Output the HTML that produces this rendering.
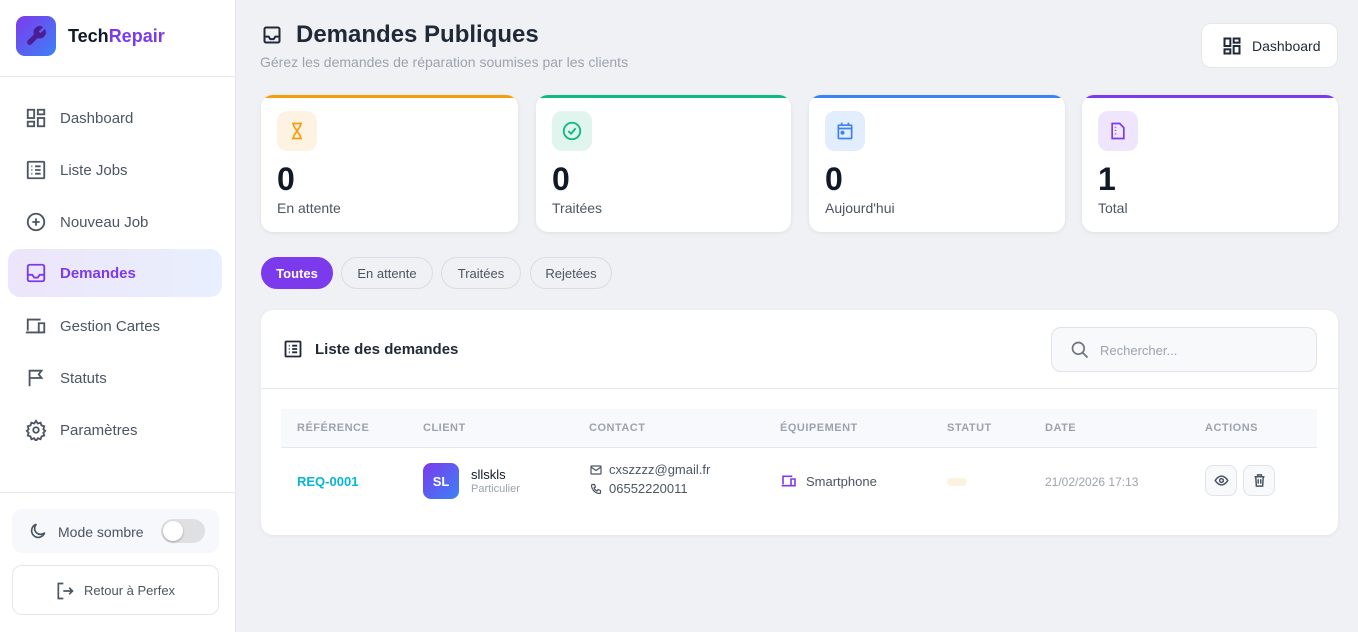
<!DOCTYPE html>
<html><head><meta charset="utf-8"><style>
*{box-sizing:border-box;margin:0;padding:0}
body{width:1358px;height:632px;overflow:hidden;background:#f0f1f5;font-family:"Liberation Sans",sans-serif;position:relative;color:#1f2937}
.sb{position:absolute;left:0;top:0;width:236px;height:632px;background:#fff;border-right:1px solid #e5e7eb}
.logo{position:absolute;left:16px;top:16px;width:40px;height:40px;border-radius:9px;background:linear-gradient(135deg,#7c3aed,#3b82f6);display:flex;align-items:center;justify-content:center}
.brand{position:absolute;left:68px;top:26px;font-size:18px;font-weight:bold;color:#111827}
.brand span{color:#7c3aed}
.hr{position:absolute;left:0;width:235px;height:1px;background:#e5e7eb}
.nav{position:absolute;left:8px;width:214px;height:48px;border-radius:12px;display:flex;align-items:center;padding-left:17px;font-size:15px;color:#4b5563}
.nav svg{width:22px;height:22px;margin-right:13px;fill:none;stroke:#4b5563;stroke-width:2}
.nav.act{background:linear-gradient(90deg,#ede5fb,#e8effd);color:#7c3aed;font-weight:bold}
.nav.act svg{stroke:#7c3aed}
.box{position:absolute;left:12px;width:207px;border-radius:10px}
.main h1{position:absolute;left:296px;top:21px;font-size:24px;font-weight:bold;color:#1f2937}
.sub{position:absolute;left:260px;top:54px;font-size:14px;color:#9ca3af}
.dbtn{position:absolute;left:1201px;top:23px;width:137px;height:45px;background:#fff;border:1px solid #e5e7eb;border-radius:10px;display:flex;align-items:center;padding-left:20px;font-size:14px;color:#1f2937}
.card{position:absolute;top:95px;height:137px;background:#fff;border-radius:12px;box-shadow:0 1px 4px rgba(0,0,0,.08);overflow:hidden}
.card .bar{height:3px}
.card .ic{position:absolute;left:16px;top:16px;width:40px;height:40px;border-radius:10px;display:flex;align-items:center;justify-content:center}
.card .n{position:absolute;left:16px;top:66px;font-size:32px;font-weight:bold;color:#111827}
.card .l{position:absolute;left:16px;top:105px;font-size:14px;color:#4b5563}
.pill{position:absolute;top:257px;height:32px;border-radius:16px;border:1px solid #d9dce2;font-size:13px;color:#4b5563;display:flex;align-items:center;justify-content:center}
.panel{position:absolute;left:261px;top:310px;width:1077px;height:225px;background:#fff;border-radius:12px;box-shadow:0 1px 4px rgba(0,0,0,.06)}
.th{position:absolute;top:409px;left:281px;width:1036px;height:39px;background:#f8f9fc;border-bottom:1px solid #e5e7eb}
.th span{position:absolute;top:13px;font-size:11px;font-weight:bold;color:#9ca3af;letter-spacing:.5px}
.t{position:absolute;font-size:13px}
</style></head><body>
<div class="sb">
 <div class="logo"><svg width="22" height="22" viewBox="0 0 24 24" fill="#4c1d95" stroke="#4c1d95" stroke-width="1.5"><path d="M14.7 6.3a1 1 0 000 1.4l1.6 1.6a1 1 0 001.4 0l3.8-3.8a6 6 0 01-7.9 7.9l-6.9 6.9a2.1 2.1 0 01-3-3l6.9-6.9a6 6 0 017.9-7.9z"/></svg></div>
 <div class="brand">Tech<span>Repair</span></div>
 <div class="hr" style="top:76px"></div>
 <div class="nav" style="top:94px"><svg viewBox="0 0 24 24"><rect x="3" y="3" width="7" height="9"/><rect x="14" y="3" width="7" height="5"/><rect x="14" y="12" width="7" height="9"/><rect x="3" y="16" width="7" height="5"/></svg>Dashboard</div>
 <div class="nav" style="top:146px"><svg viewBox="0 0 24 24"><rect x="3" y="3" width="18" height="18" rx="1"/><path d="M7 8h1M11 8h6M7 12h1M11 12h6M7 16h1M11 16h6"/></svg>Liste Jobs</div>
 <div class="nav" style="top:198px"><svg viewBox="0 0 24 24"><circle cx="12" cy="12" r="9"/><path d="M12 8v8M8 12h8"/></svg>Nouveau Job</div>
 <div class="nav act" style="top:249px"><svg viewBox="0 0 24 24"><rect x="3" y="3" width="18" height="18" rx="2"/><path d="M3 14h5l2 3h4l2-3h5"/></svg>Demandes</div>
 <div class="nav" style="top:302px"><svg viewBox="0 0 24 24"><path d="M3 17V5h14M1 19h14M15 9h6v10h-6z"/></svg>Gestion Cartes</div>
 <div class="nav" style="top:354px"><svg viewBox="0 0 24 24"><path d="M5 21V4h13l-3 4 3 4H5"/></svg>Statuts</div>
 <div class="nav" style="top:406px"><svg viewBox="0 0 24 24"><circle cx="12" cy="12" r="3"/><path d="M12 2l2 3 3-1 1 3 3 1-1 3 2 2-2 2 1 3-3 1-1 3-3-1-2 3-2-3-3 1-1-3-3-1 1-3-2-2 2-2-1-3 3-1 1-3 3 1z"/></svg>Paramètres</div>
 <div class="hr" style="top:492px"></div>
 <div class="box" style="top:509px;height:44px;background:#f7f8fb"><svg style="position:absolute;left:16px;top:12px" width="20" height="20" viewBox="0 0 24 24" fill="none" stroke="#4b5563" stroke-width="2"><path d="M20 14A8 8 0 1110 4a6 6 0 0010 10z"/></svg><span class="t" style="left:46px;top:15px;font-size:14px;color:#4b5563">Mode sombre</span><div style="position:absolute;left:149px;top:10px;width:44px;height:24px;border-radius:12px;background:#e0e0e3"><div style="position:absolute;left:2px;top:2px;width:20px;height:20px;border-radius:50%;background:#fff;box-shadow:0 1px 2px rgba(0,0,0,.3)"></div></div></div>
 <div class="box" style="top:565px;height:50px;border:1px solid #e5e7eb;background:#fff"><svg style="position:absolute;left:42px;top:15px" width="20" height="20" viewBox="0 0 24 24" fill="none" stroke="#4b5563" stroke-width="2"><path d="M10 3H4v18h6M10 12h11M17 8l4 4-4 4"/></svg><span class="t" style="left:71px;top:17px;color:#4b5563">Retour à Perfex</span></div>
</div>
<div class="main">
 <svg style="position:absolute;left:262px;top:25px" width="20" height="20" viewBox="0 0 24 24" fill="none" stroke="#1f2937" stroke-width="2.4"><rect x="3" y="3" width="18" height="18" rx="2"/><path d="M3 14h5l2 3h4l2-3h5"/></svg>
 <h1>Demandes Publiques</h1>
 <div class="sub">Gérez les demandes de réparation soumises par les clients</div>
 <div class="dbtn"><svg width="20" height="20" viewBox="0 0 24 24" fill="none" stroke="#1f2937" stroke-width="2.4" style="margin-right:10px"><rect x="3" y="3" width="7" height="9"/><rect x="14" y="3" width="7" height="5"/><rect x="14" y="12" width="7" height="9"/><rect x="3" y="16" width="7" height="5"/></svg>Dashboard</div>

 <div class="card" style="left:261px;width:257px"><div class="bar" style="background:#f59e0b"></div><div class="ic" style="background:#fef3e2"><svg width="20" height="20" viewBox="0 0 24 24" fill="none" stroke="#f59e0b" stroke-width="2"><path d="M6 3h12M6 21h12M8 3v3l4 6-4 6v3M16 3v3l-4 6 4 6v3"/></svg></div><div class="n">0</div><div class="l">En attente</div></div>
 <div class="card" style="left:536px;width:255px"><div class="bar" style="background:#10b981"></div><div class="ic" style="background:#dff5ee"><svg width="22" height="22" viewBox="0 0 24 24" fill="none" stroke="#10b981" stroke-width="2"><circle cx="12" cy="12" r="9"/><path d="M8 12l3 3 5-6"/></svg></div><div class="n">0</div><div class="l">Traitées</div></div>
 <div class="card" style="left:809px;width:256px"><div class="bar" style="background:#3b82f6"></div><div class="ic" style="background:#e2edfd"><svg width="20" height="20" viewBox="0 0 24 24" fill="none" stroke="#3b82f6" stroke-width="2"><rect x="4" y="5" width="16" height="16" rx="1"/><path d="M4 9h16M8 2v4M16 2v4"/><circle cx="9" cy="14" r="1.5" fill="#3b82f6"/></svg></div><div class="n">0</div><div class="l">Aujourd'hui</div></div>
 <div class="card" style="left:1082px;width:256px"><div class="bar" style="background:#7c3aed"></div><div class="ic" style="background:#efe5fd"><svg width="20" height="20" viewBox="0 0 24 24" fill="none" stroke="#7c3aed" stroke-width="2"><path d="M5 3h9l5 5v13H5z"/><path d="M9 7v1M9 11v1M9 15v1" /></svg></div><div class="n">1</div><div class="l">Total</div></div>

 <div class="pill" style="left:261px;width:72px;background:#7c3aed;border-color:#7c3aed;color:#fff;font-weight:bold">Toutes</div>
 <div class="pill" style="left:341px;width:92px">En attente</div>
 <div class="pill" style="left:441px;width:80px">Traitées</div>
 <div class="pill" style="left:530px;width:82px">Rejetées</div>

 <div class="panel">
  <svg style="position:absolute;left:22px;top:29px" width="20" height="20" viewBox="0 0 24 24" fill="none" stroke="#1f2937" stroke-width="2.2"><rect x="3" y="3" width="18" height="18" rx="1"/><path d="M7 8h1M11 8h6M7 12h1M11 12h6M7 16h1M11 16h6"/></svg>
  <div class="t" style="left:54px;top:31px;font-size:15px;font-weight:bold;color:#1f2937">Liste des demandes</div>
  <div style="position:absolute;left:790px;top:17px;width:266px;height:45px;border:1px solid #e0e3e8;border-radius:10px;background:#f8f9fb"><svg style="position:absolute;left:18px;top:12px" width="20" height="20" viewBox="0 0 24 24" fill="none" stroke="#6b7280" stroke-width="2"><circle cx="10" cy="10" r="7"/><path d="M15 15l6 6"/></svg><span class="t" style="left:48px;top:15px;color:#9ca3af">Rechercher...</span></div>
  <div style="position:absolute;left:0;top:78px;width:1077px;height:1px;background:#e5e7eb"></div>
 </div>
 <div class="th"><span style="left:16px">RÉFÉRENCE</span><span style="left:142px">CLIENT</span><span style="left:308px">CONTACT</span><span style="left:499px">ÉQUIPEMENT</span><span style="left:666px">STATUT</span><span style="left:764px">DATE</span><span style="left:924px">ACTIONS</span></div>
 <div class="t" style="left:297px;top:474px;color:#06b6d4;font-weight:bold">REQ-0001</div>
 <div style="position:absolute;left:423px;top:463px;width:36px;height:36px;border-radius:8px;background:linear-gradient(135deg,#7c3aed,#3b82f6);color:#fff;font-size:13px;font-weight:bold;display:flex;align-items:center;justify-content:center">SL</div>
 <div class="t" style="left:471px;top:467px;color:#111827">sllskls</div>
 <div class="t" style="left:471px;top:483px;font-size:11px;color:#9ca3af">Particulier</div>
 <svg style="position:absolute;left:590px;top:464px" width="12" height="12" viewBox="0 0 24 24" fill="none" stroke="#4b5563" stroke-width="2.4"><rect x="2" y="4" width="20" height="16" rx="1"/><path d="M2 6l10 7 10-7"/></svg>
 <div class="t" style="left:609px;top:462px;color:#4b5563">cxszzzz@gmail.fr</div>
 <svg style="position:absolute;left:590px;top:483px" width="12" height="12" viewBox="0 0 24 24" fill="none" stroke="#4b5563" stroke-width="2.4"><path d="M5 3h4l2 5-3 2a11 11 0 006 6l2-3 5 2v4a2 2 0 01-2 2A17 17 0 013 5a2 2 0 012-2z"/></svg>
 <div class="t" style="left:609px;top:481px;color:#4b5563">06552220011</div>
 <svg style="position:absolute;left:781px;top:473px" width="16" height="16" viewBox="0 0 24 24" fill="none" stroke="#7c3aed" stroke-width="2.4"><path d="M3 17V5h14M1 19h14M15 9h6v10h-6z"/></svg>
 <div class="t" style="left:806px;top:474px;color:#4b5563">Smartphone</div>
 <div style="position:absolute;left:947px;top:478px;width:20px;height:8px;border-radius:4px;background:#fdf2e0"></div>
 <div class="t" style="left:1045px;top:475px;font-size:12px;color:#9ca3af">21/02/2026 17:13</div>
 <div style="position:absolute;left:1205px;top:465px;width:32px;height:31px;border:1px solid #e0e3e8;border-radius:8px;background:#f8f9fb"><svg style="position:absolute;left:8px;top:7px" width="15" height="15" viewBox="0 0 24 24" fill="none" stroke="#4b5563" stroke-width="2.4"><path d="M2 12s4-7 10-7 10 7 10 7-4 7-10 7S2 12 2 12z"/><circle cx="12" cy="12" r="3"/></svg></div>
 <div style="position:absolute;left:1243px;top:465px;width:32px;height:31px;border:1px solid #e0e3e8;border-radius:8px;background:#f8f9fb"><svg style="position:absolute;left:8px;top:7px" width="15" height="15" viewBox="0 0 24 24" fill="none" stroke="#4b5563" stroke-width="2.4"><path d="M4 6h16M9 6V3h6v3M6 6l1 15h10l1-15M10 10v7M14 10v7"/></svg></div>
</div>
</body></html>
